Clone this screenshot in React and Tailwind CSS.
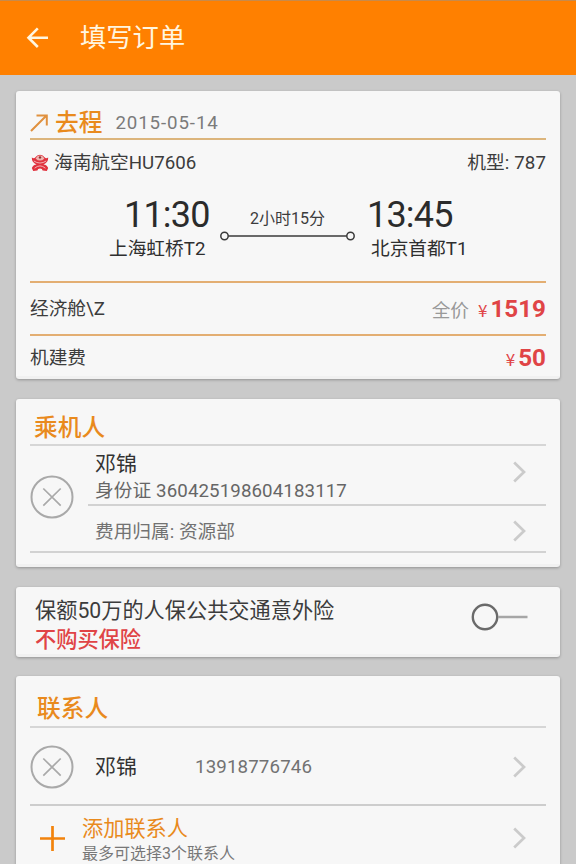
import React from 'react';

const Card = ({ className = '', children }) => (
    <div className={`bg-[#f7f7f7] rounded-[3px] border-b-[3px] border-[#f1f1f1] shadow-[0_1px_3px_rgba(0,0,0,0.28)] px-[14px] overflow-hidden ${className}`}>
        {children}
    </div>
);

const Chevron = ({ className = '' }) => (
    <svg className={`w-[14px] h-[22px] mr-[19px] shrink-0 ${className}`} viewBox="0 0 14 22" fill="none" stroke="#cbcbcb" strokeWidth="2.7">
        <path d="M1.2 1.5 L11 11 L1.2 20.5" />
    </svg>
);

const RemoveButton = ({ className = '' }) => (
    <button className={`w-[44px] h-[44px] shrink-0 ${className}`}>
        <svg className="w-full h-full" viewBox="0 0 44 44" fill="none" stroke="#a9a9a9" strokeWidth="2">
            <circle cx="22" cy="22" r="20.5" />
            <path d="M13.3 13.5 L30.7 30.7 M30.7 13.5 L13.3 30.7" strokeWidth="1.7" />
        </svg>
    </button>
);

const AirlineLogo = () => (
    <svg className="w-[18px] h-[18px] ml-[1px] mr-[5px]" viewBox="0 0 18 18">
        <path d="M.8 3.5 Q3.2 4.8 4.2 3.4 Q6 .8 9 .8 Q12 .8 13.8 3.4 Q14.8 4.8 17.2 3.5 Q17.4 8.6 12.4 10.4 Q16 10.8 17.2 14 L15.8 17 L11.6 16.6 Q11.4 14.4 9 14.4 Q6.6 14.4 6.4 16.6 L2.2 17 L.8 14 Q2 10.8 5.6 10.4 Q.6 8.6 .8 3.5Z" fill="#e0323e" />
        <path d="M4.6 4.4 Q6 1.6 9 1.6 Q12 1.6 13.4 4.4 Q11.5 6.6 9 6.6 Q6.5 6.6 4.6 4.4Z" fill="#f0b5b0" />
        <circle cx="9" cy="3.4" r="1.2" fill="#8f3430" />
        <path d="M2.8 7 Q9 11 15.2 7 M3.6 14.2 Q9 9.6 14.4 14.2" fill="none" stroke="#f6cfcf" strokeWidth=".8" />
    </svg>
);

const City = ({ time, name, className }) => (
    <div className={`flex flex-col items-start ${className}`}>
        <span className="text-[36px] leading-[40px] tracking-[-0.8px] text-[#2b2b2b]">{time}</span>
        <span className="mt-[1px] text-[18.7px] leading-[27px] text-[#2f2f2f] whitespace-nowrap">{name}</span>
    </div>
);

const Price = ({ value }) => (
    <span className="flex items-baseline text-[#e04446]">
        <span className="text-[17px] mr-[3px] font-['Noto_Sans_CJK_SC']">¥</span>
        <span className="text-[24.2px] font-bold">{value}</span>
    </span>
);

export default function App() {
    return (
        <div className="w-[576px] h-[864px] overflow-hidden bg-[#cacaca] text-[#3c3c3c] font-['Roboto','Noto_Sans_CJK_SC',sans-serif]">
            <header className="h-[75px] bg-[#ff8000] border-t border-[#c88a4a] flex items-center">
                <svg className="w-[24px] h-[24px] ml-[26px]" viewBox="0 0 24 24" fill="none" stroke="#fff6e0" strokeWidth="2.6">
                    <path d="M22 11.7 H2.5 M11.8 2.4 L2.5 11.7 L11.8 21" />
                </svg>
                <h1 className="ml-[30px] text-[26.3px] leading-[40px] text-[#fff6e0]">填写订单</h1>
            </header>

            <main className="px-[16px] pt-[16px] flex flex-col">
                {/* Flight */}
                <Card className="h-[288px]">
                    <div className="h-[49px] pt-[17px] flex items-center border-b-2 border-[#dcb57c]">
                        <svg className="w-[19px] h-[19px] mr-[6px]" viewBox="0 0 19 19" fill="none" stroke="#e0913f" strokeWidth="2">
                            <path d="M1 17 L16.5 1.5 M6.5 1.5 H16.8 V11.5" />
                        </svg>
                        <span className="text-[23.7px] leading-[32px] font-medium text-[#e98a1d]">去程</span>
                        <span className="ml-[13px] mt-[1px] text-[18.7px] tracking-[0.9px] text-[#7b7b7b]">2015-05-14</span>
                    </div>
                    <div className="h-[44px] pt-[2px] flex items-center justify-between text-[18.7px]">
                        <span className="flex items-center">
                            <AirlineLogo />
                            海南航空HU7606
                        </span>
                        <span className="tracking-[0.1px]">机型: 787</span>
                    </div>
                    <div className="h-[97px] pt-[11px] flex">
                        <City time="11:30" name="上海虹桥T2" className="w-[110px] ml-[79px] [&>:first-child]:ml-[15px]" />
                        <div className="w-[136px] flex flex-col items-center pt-[13px]">
                            <span className="text-[16px] leading-[22px] ml-[1px]">2小时15分</span>
                            <svg className="w-[136px] h-[12px]" viewBox="0 0 136 12" fill="none" stroke="#3a3a3a" strokeWidth="1.5">
                                <circle cx="5.5" cy="6" r="3.7" />
                                <circle cx="131.5" cy="6" r="3.7" />
                                <path d="M9.2 6 H127.8" />
                            </svg>
                        </div>
                        <City time="13:45" name="北京首都T1" className="ml-[12px] [&>:last-child]:ml-[4px]" />
                    </div>
                    <div className="h-[55px] pt-[2px] flex items-center justify-between border-y-2 border-[#e3ae72] text-[18.7px]">
                        <span>经济舱\Z</span>
                        <span className="flex items-baseline">
                            <span className="text-[#999] mr-[9px]">全价</span>
                            <Price value="1519" />
                        </span>
                    </div>
                    <div className="h-[43px] pt-[1px] flex items-center justify-between text-[18.7px]">
                        <span>机建费</span>
                        <Price value="50" />
                    </div>
                </Card>

                {/* Passengers */}
                <Card className="mt-[20px] h-[168px]">
                    <h2 className="h-[47px] pt-[12px] pl-[4px] text-[23.7px] leading-[34px] font-medium text-[#e98a1d] border-b-2 border-[#d6d6d6]">乘机人</h2>
                    <div className="h-[107px] flex items-center border-b-2 border-[#d2d2d2]">
                        <RemoveButton className="mb-[3px]" />
                        <div className="flex-1 ml-[14px]">
                            <div className="h-[60px] pl-[7px] flex items-center justify-between border-b-2 border-[#d2d2d2]">
                                <div className="pt-[4px]">
                                    <div className="text-[21px] leading-[28px] text-[#333]">邓锦</div>
                                    <div className="text-[18.7px] leading-[26px] tracking-[0.1px] text-[#666]">身份证 360425198604183117</div>
                                </div>
                                <Chevron className="mb-[6px]" />
                            </div>
                            <div className="h-[45px] pt-[5px] pl-[7px] flex items-center justify-between">
                                <span className="pt-[2px] text-[18.7px] text-[#727272]">费用归属: 资源部</span>
                                <Chevron />
                            </div>
                        </div>
                    </div>
                </Card>

                {/* Insurance */}
                <Card className="mt-[20px] h-[70px] flex items-center justify-between">
                    <div className="pt-[9px] pl-[5px] text-[21.2px] leading-[29px]">
                        <div>保额50万的人保公共交通意外险</div>
                        <div className="text-[#e04446] font-medium">不购买保险</div>
                    </div>
                    <svg className="w-[57px] h-[28px] mr-[18px] mb-[7px]" viewBox="0 0 57 28" fill="none">
                        <circle cx="14" cy="14" r="12.2" stroke="#6a6a6a" strokeWidth="2.4" />
                        <path d="M27 14 H56.5" stroke="#a6a6a6" strokeWidth="2.4" />
                    </svg>
                </Card>

                {/* Contacts */}
                <Card className="mt-[19px] h-[220px]">
                    <h2 className="h-[52px] pt-[16px] pl-[7px] text-[23.7px] leading-[34px] font-medium text-[#e98a1d] border-b-2 border-[#d6d6d6]">联系人</h2>
                    <div className="h-[78px] pt-[1px] flex items-center border-b-2 border-[#cdcdcd]">
                        <RemoveButton />
                        <span className="w-[100px] ml-[21px] pt-[3px] text-[21px] text-[#333]">邓锦</span>
                        <span className="flex-1 pt-[2px] text-[18.7px] tracking-[0.14px] text-[#727272]">13918776746</span>
                        <Chevron />
                    </div>
                    <div className="h-[64px] flex items-center">
                        <svg className="w-[25px] h-[25px] ml-[10px] mr-[17px]" viewBox="0 0 25 25" fill="none" stroke="#f2830c" strokeWidth="2.7">
                            <path d="M12.5 0 V25 M0 12.5 H25" />
                        </svg>
                        <div className="flex-1 pt-[3px]">
                            <div className="text-[21.2px] leading-[27px] text-[#e98a1d]">添加联系人</div>
                            <div className="text-[16px] leading-[23px] text-[#777]">最多可选择3个联系人</div>
                        </div>
                        <Chevron />
                    </div>
                </Card>
            </main>
        </div>
    );
}
